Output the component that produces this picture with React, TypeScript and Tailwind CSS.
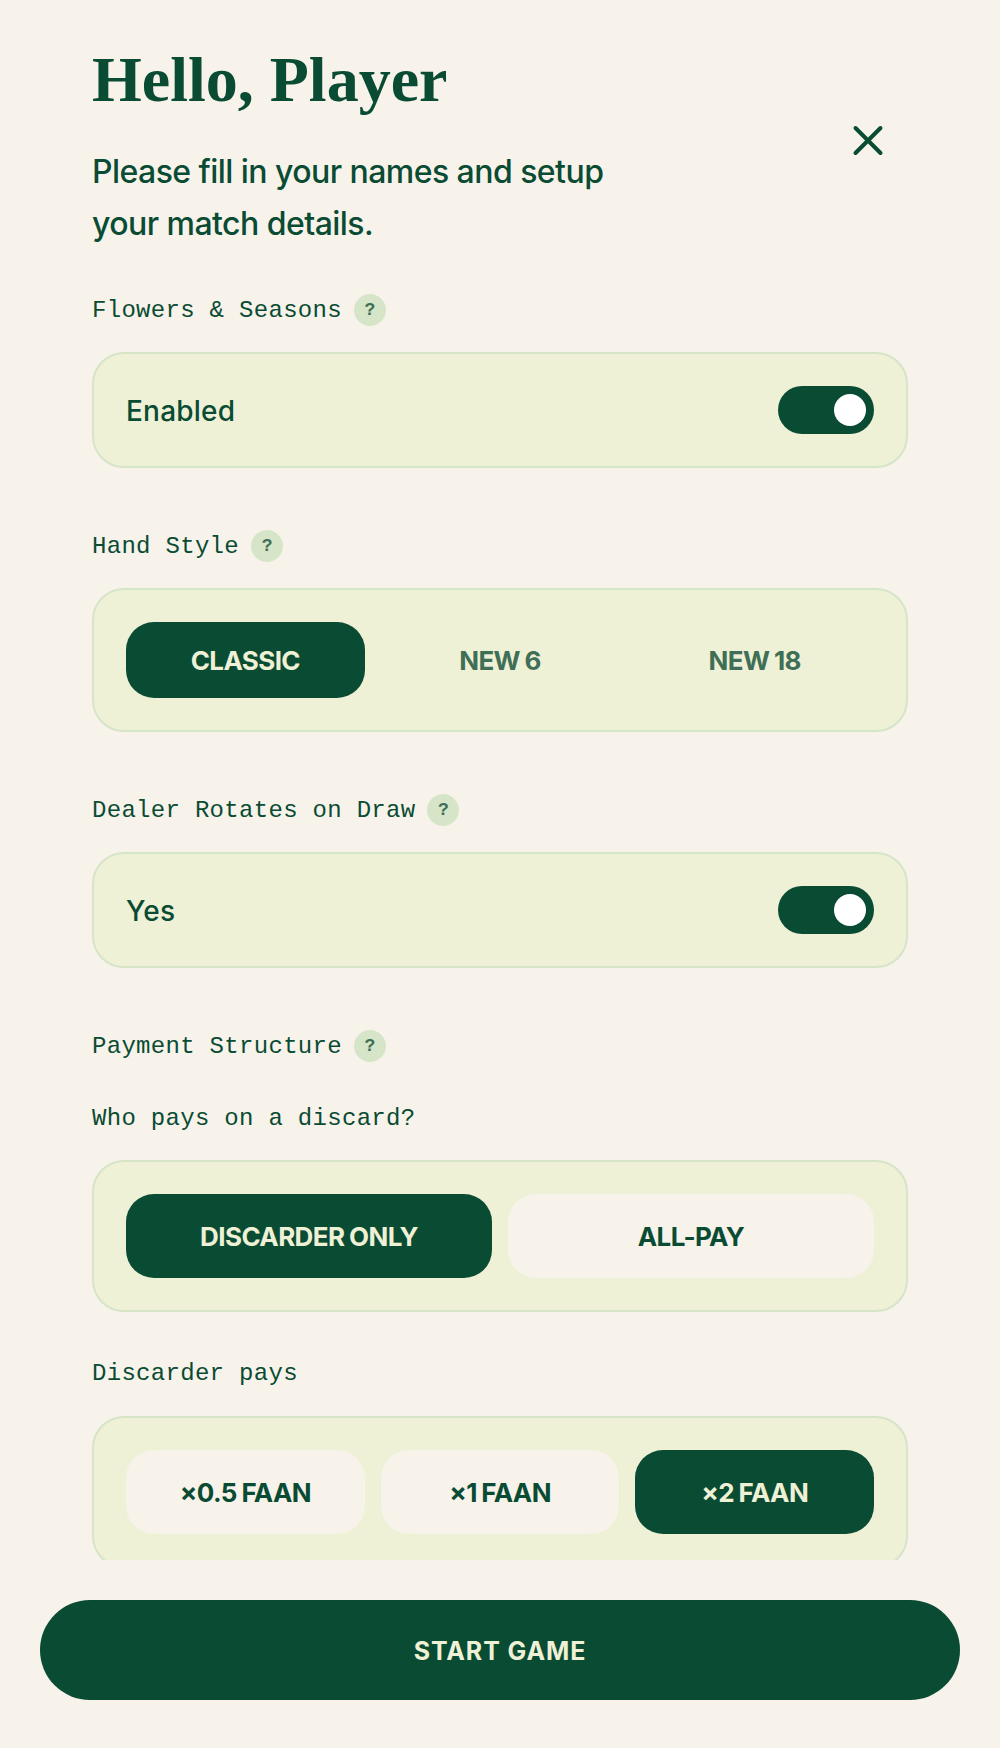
import React from "react";

const serif = "font-['Liberation_Serif',serif]";
const sans = "font-['Inter',sans-serif]";
const mono = "font-['Liberation_Mono',monospace]";

const Help = () => (
    <span className={`flex h-8 w-8 items-center justify-center rounded-full bg-[#d6e5c8] text-[18px] font-bold text-[#3f6f56] ${mono}`}>?</span>
);

const Label = ({ text, help }: { text: string; help?: boolean }) => (
    <div className={`flex h-8 items-center gap-3 text-[24px] text-[#0a4b33] ${mono}`}>
        <span className="pt-0.5 tracking-[0.3px]">{text}</span>
        {help && <Help />}
    </div>
);

const Toggle = ({ text }: { text: string }) => (
    <div className="mt-[26px] flex h-[116px] items-center justify-between rounded-[32px] border-2 border-[#d6e5c8] bg-[#eef1d6] px-8">
        <span className={`pt-0.5 text-[28px] font-medium tracking-[0.2px] text-[#0a4b33] ${sans}`}>{text}</span>
        <div className="flex h-12 w-24 items-center justify-end rounded-full bg-[#0a4b33] pr-2">
            <div className="h-8 w-8 rounded-full bg-white" />
        </div>
    </div>
);

type Opt = { text: string; active?: boolean };

const Options = ({ options, plain, mt }: { options: Opt[]; plain?: boolean; mt: string }) => (
    <div className={`${mt} flex gap-4 rounded-[32px] border-2 border-[#d6e5c8] bg-[#eef1d6] p-8`}>
        {options.map((o) => {
            let color = "bg-[#f7f3eb] text-[#0a4b33]";
            if (o.active) color = "bg-[#0a4b33] text-[#eef1d6]";
            else if (plain) color = "text-[#3f6f56]";
            return (
                <button
                    key={o.text}
                    className={`flex flex-1 items-center justify-center rounded-[28px] text-[26px] font-bold tracking-[-0.6px] [word-spacing:-1px] ${plain ? "h-[76px]" : "h-[84px]"} ${color} ${sans}`}
                >
                    {o.text}
                </button>
            );
        })}
    </div>
);

export default function App() {
    return (
        <div className="relative flex h-[1748px] w-[1000px] flex-col overflow-hidden bg-[#f7f3eb]">
            {/* Close */}
            <button className="absolute left-[852px] top-[124px] h-8 w-8 text-[#0a4b33]">
                <svg viewBox="0 0 32 32" fill="none" stroke="currentColor" strokeWidth="4" strokeLinecap="round">
                    <path d="M3.5 4L28.5 29M28.5 4L3.5 29" />
                </svg>
            </button>

            <div className="h-[1560px] overflow-hidden px-[92px]">
                <h1 className={`mt-[36px] text-[64px] font-bold leading-[88px] text-[#0a4b33] ${serif}`}>Hello, Player</h1>
                <p className={`mt-[22px] w-[560px] text-[32px] font-medium leading-[52px] tracking-[-0.55px] text-[#0a4b33] ${sans}`}>
                    Please fill in your names and setup your match details.
                </p>

                <div className="mt-[44px]"><Label text="Flowers & Seasons" help /></div>
                <Toggle text="Enabled" />

                <div className="mt-[62px]"><Label text="Hand Style" help /></div>
                <Options mt="mt-[26px]" plain options={[{ text: "CLASSIC", active: true }, { text: "NEW 6" }, { text: "NEW 18" }]} />

                <div className="mt-[62px]"><Label text="Dealer Rotates on Draw" help /></div>
                <Toggle text="Yes" />

                <div className="mt-[62px]"><Label text="Payment Structure" help /></div>
                <div className="mt-[40px]"><Label text="Who pays on a discard?" /></div>
                <Options mt="mt-[26px]" options={[{ text: "DISCARDER ONLY", active: true }, { text: "ALL-PAY" }]} />

                <div className="mt-[45px]"><Label text="Discarder pays" /></div>
                <Options mt="mt-[27px]" options={[{ text: "×0.5 FAAN" }, { text: "×1 FAAN" }, { text: "×2 FAAN", active: true }]} />
            </div>

            <div className="px-10 pt-10">
                <button className={`flex h-[100px] w-full items-center justify-center rounded-full bg-[#0a4b33] pt-1 text-[25px] font-bold tracking-[0.9px] text-[#eef1d6] ${sans}`}>
                    START GAME
                </button>
            </div>
        </div>
    );
}
